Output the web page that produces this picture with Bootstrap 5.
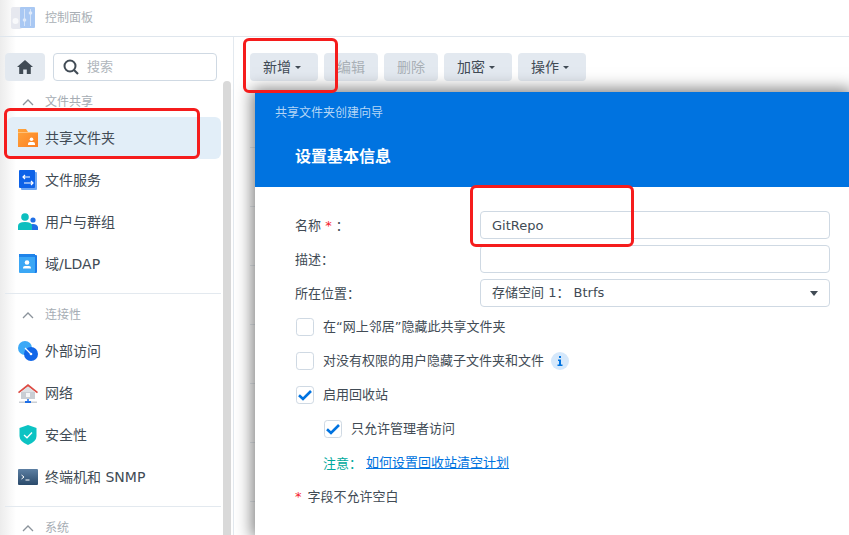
<!DOCTYPE html>
<html lang="zh">
<head>
<meta charset="utf-8">
<title>控制面板</title>
<link rel="stylesheet" href="https://cdn.jsdelivr.net/npm/bootstrap@5.3.0/dist/css/bootstrap.min.css">
<style>
html,body{height:100%;}
body{width:849px;height:535px;overflow:hidden;font-family:"DejaVu Sans","Noto Sans CJK SC",sans-serif;font-size:14px;color:#414b55;background:#fff;}
.app-shell{position:relative;height:535px;background:linear-gradient(90deg,#ececec 0,#fff 16px);}
.app-top{height:37px;border-bottom:1px solid #dfe6ed;padding-left:11px;gap:10px;color:#a9afb5;font-size:12px;}
.app-body{height:498px;}
.side-pane{width:234px;flex:none;border-right:1px solid #e3e9ef;padding:16px 0 0 5px;position:relative;overflow:hidden;}
.side-tools{width:212px;height:28px;gap:8px;}
.home-btn{width:40px;height:28px;background:#e3e9f0;border-radius:4px;}
.search-box{width:164px;height:28px;border:1px solid #cfd9e3;border-radius:4px;padding-left:9px;gap:8px;color:#b0b6bc;font-size:13px;background:#fff;}
.side-list{width:216px;}
.sec-head{height:36px;padding:6px 0 0 17px;gap:11px;font-size:12px;color:#a6adb4;}
.side-item{height:42px;padding:0 0 0 13px;gap:7px;color:#414b55;font-size:14px;border-radius:6px;}
.side-item.is-on{background:#e2eef8;margin-left:2px;padding-left:11px;width:214px;}
.side-item svg{flex:none;}
.side-rule{border-top:1px solid #e3e9ef;margin:8px 0 0;height:1px;}
.rail{position:absolute;left:223px;top:44px;bottom:0;width:8px;background:#d9d9d9;border-radius:4px 4px 0 0;}
.main-pane{min-width:0;padding:16px 0 0 16px;}
.tool-row{gap:6px;height:28px;}
.tool-btn{height:28px;padding:0 13px;font-size:14px;line-height:28px;background:#e3e9f0;color:#414b55;border:0;border-radius:4px;}
.tool-btn:disabled{background:#e3e9f0;color:#a9b0b6;opacity:1;}
.tool-btn.dropdown-toggle::after{border-top-width:3px;border-left-width:3px;border-right-width:3px;margin-left:4px;margin-right:4px;vertical-align:3px;}
.bg-rows{margin-top:8px;}
.bg-row{height:59px;border-bottom:1px solid #e8ecf0;}
.wizard{position:absolute;left:255px;top:92px;right:0;bottom:0;background:#fff;font-size:13px;box-shadow:0 0 15px 3px rgba(0,0,0,.5);}
.wiz-head{height:95px;background:#0073e0;padding:12px 0 0 20px;color:#b5d6f6;font-size:12px;}
.wiz-title{color:#fff;font-size:16px;font-weight:700;margin:23px 0 0 20px;line-height:24px;}
.wiz-form{padding:24px 19px 0 40px;}
.field-row{height:28px;margin-bottom:6px;}
.field-label{width:185px;flex:none;}
.wide-colon{font-family:"Noto Sans CJK TC",sans-serif;}
.field-ctl{height:28px;min-height:28px;padding:0 11px;font-size:13px;color:#414b55;border:1px solid #cfd9e3;border-radius:4px;box-shadow:none;}
select.field-ctl{padding:0 11px;background-image:url("data:image/svg+xml,%3Csvg xmlns='http://www.w3.org/2000/svg' width='8' height='5'%3E%3Cpath d='M0 0h8L4 5z' fill='%23414b55'/%3E%3C/svg%3E");background-position:right 11px center;background-size:8px 5px;}
.star{color:#f5222d;}
.chk-row{height:34px;gap:9px;padding-left:1px;}
.chk-row.top-gap{margin-top:-3px;}
.chk-row.sub{padding-left:29px;gap:9px;}
.chk-box{width:18px;height:18px;margin:0;flex:none;border:1px solid #cfd9e3;border-radius:4px;box-shadow:none!important;}
.chk-box:checked{background-color:#fff;border-color:#cfd9e3;background-image:url("data:image/svg+xml,%3Csvg xmlns='http://www.w3.org/2000/svg' viewBox='0 0 18 18'%3E%3Cpath d='M3 9.2l4 3.800 8-8' fill='none' stroke='%230073e0' stroke-width='2.600'/%3E%3C/svg%3E");background-size:18px 18px;}
.info-dot{width:18px;height:18px;background:#d5e8fb;margin-left:-2px;}
.note-row{height:34px;padding-left:28px;gap:4px;}
.note-lead{color:#00a99d;}
.note-link{color:#0073e0;}
.req-row{height:34px;gap:6px;}
.mark-box{position:absolute;border:3px solid #f51c1c;border-radius:6px;pointer-events:none;}
.mark-a{left:243px;top:38px;width:95px;height:55px;}
.mark-b{left:4px;top:108px;width:196px;height:51px;}
.mark-c{left:470px;top:185px;width:164px;height:62px;}
</style>
</head>
<body>
<div class="app-shell">
  <div class="app-top d-flex align-items-center">
    <svg width="24" height="24" viewBox="0 0 24 24">
      <rect x="0" y="1" width="11" height="22" rx="2" fill="#e6e8ef"/>
      <circle cx="4.500" cy="15" r="3" fill="#f8f9fb"/>
      <rect x="9" y="1" width="15" height="21" rx="1" fill="#a9c8f3"/>
      <path d="M13.500 3v17M19.500 3v17" stroke="#d4e3f8" stroke-width="1"/>
      <circle cx="13.500" cy="14" r="1.800" fill="#dfeafa"/><circle cx="19.500" cy="7" r="1.800" fill="#dfeafa"/>
    </svg>
    <span>控制面板</span>
  </div>
  <div class="app-body d-flex">
    <aside class="side-pane">
      <div class="side-tools d-flex">
        <div class="home-btn d-flex align-items-center justify-content-center">
          <svg width="16" height="14" viewBox="0 0 16 14"><path d="M8 0 0 7h2.200v7h4V9.500h3.600V14h4V7H16z" fill="#414b55"/></svg>
        </div>
        <div class="search-box d-flex align-items-center">
          <svg width="16" height="16" viewBox="0 0 16 16"><circle cx="7" cy="7" r="5.500" fill="none" stroke="#414b55" stroke-width="2"/><path d="M11 11l4 4" stroke="#414b55" stroke-width="2.200"/></svg>
          <span>搜索</span>
        </div>
      </div>
      <nav class="side-list">
        <div class="sec-head d-flex align-items-center">
          <svg width="12" height="7" viewBox="0 0 12 7"><path d="M1 6l5-5 5 5" fill="none" stroke="#8b939b" stroke-width="1.300"/></svg><span>文件共享</span>
        </div>
        <a class="side-item is-on d-flex align-items-center text-decoration-none">
          <svg width="20" height="20" viewBox="0 0 20 20"><defs><linearGradient id="fo" x1="0" y1="0" x2="1" y2="1"><stop offset="0" stop-color="#ffa53d"/><stop offset="1" stop-color="#fb7f22"/></linearGradient></defs><path d="M0 1h8l2 3h10v15H0z" fill="url(#fo)"/><path d="M0 4h20v1H0z" fill="#ffc27a"/><circle cx="13.500" cy="11.300" r="1.800" fill="#fff"/><path d="M10 17v-1.500q0-1.500 2-1.500h3q2 0 2 1.500V17z" fill="#fff"/></svg>
          <span>共享文件夹</span>
        </a>
        <a class="side-item d-flex align-items-center text-decoration-none">
          <svg width="20" height="20" viewBox="0 0 20 20"><rect x="3" y="2" width="16" height="18" rx="1" fill="#6fa8f3"/><rect x="1" y="0" width="16" height="18" rx="1" fill="#0d62e8"/><path d="M12 7H5M7 5 5 7l2 2M6 13h9M13 11l2 2-2 2" fill="none" stroke="#fff" stroke-width="1.200"/></svg>
          <span>文件服务</span>
        </a>
        <a class="side-item d-flex align-items-center text-decoration-none">
          <svg width="20" height="20" viewBox="0 0 20 20"><circle cx="15" cy="8" r="2.600" fill="#1f6fe6"/><path d="M11 18v-3q0-3 4-3t5 3v3z" fill="#1f6fe6"/><circle cx="7" cy="5" r="3.800" fill="#0dbfbf"/><path d="M0 18v-4q0-4 7-4t7 4v4z" fill="#0dbfbf"/></svg>
          <span>用户与群组</span>
        </a>
        <a class="side-item d-flex align-items-center text-decoration-none">
          <svg width="20" height="20" viewBox="0 0 20 20"><rect x="3" y="1" width="16" height="18" rx="1" fill="#1c7ce8"/><rect x="1" y="0" width="16" height="19" rx="1" fill="#3ba7f5"/><rect x="1" y="0" width="16" height="3" fill="#1f84ea"/><circle cx="9" cy="8.500" r="2.300" fill="#fff"/><path d="M5 14.500v-.5q0-2 2-2h4q2 0 2 2v.5z" fill="#fff"/></svg>
          <span>域/LDAP</span>
        </a>
        <div class="side-rule"></div>
        <div class="sec-head d-flex align-items-center">
          <svg width="12" height="7" viewBox="0 0 12 7"><path d="M1 6l5-5 5 5" fill="none" stroke="#8b939b" stroke-width="1.300"/></svg><span>连接性</span>
        </div>
        <a class="side-item d-flex align-items-center text-decoration-none">
          <svg width="20" height="20" viewBox="0 0 20 20"><circle cx="7" cy="7" r="7" fill="#3ca9f7"/><circle cx="13" cy="13" r="7" fill="#1166e8"/><path d="M7 7l6 6" stroke="#fff" stroke-width="1.200"/><circle cx="13" cy="13" r="1.300" fill="#fff"/></svg>
          <span>外部访问</span>
        </a>
        <a class="side-item d-flex align-items-center text-decoration-none">
          <svg width="20" height="20" viewBox="0 0 20 20"><path d="M3 9h14v7H3z" fill="#c9ced4"/><path d="M0 9l10-8 10 8-1 1.200L10 3.500 1 10.200z" fill="#dd4b43"/><path d="M10 3.500l7 5.500H3z" fill="#dde1e5"/><rect x="8" y="10" width="4" height="4" fill="#f5f6f7"/><rect x="1" y="18.500" width="18" height="1.500" fill="#c9ced4"/><path d="M10 16v3" stroke="#1f6fe6" stroke-width="1.500"/><rect x="7" y="18" width="6" height="2" fill="#1f6fe6"/></svg>
          <span>网络</span>
        </a>
        <a class="side-item d-flex align-items-center text-decoration-none">
          <svg width="20" height="20" viewBox="0 0 20 20"><path d="M10 0l8.500 3v8q0 5.500-8.500 9-8.500-3.500-8.500-9V3z" fill="#0cc3c3"/><path d="M6 10l3 2.800L14 7.500" fill="none" stroke="#fff" stroke-width="1.300"/></svg>
          <span>安全性</span>
        </a>
        <a class="side-item d-flex align-items-center text-decoration-none">
          <svg width="20" height="16" viewBox="0 0 20 16"><defs><linearGradient id="tm" x1="0" y1="0" x2="0" y2="1"><stop offset="0" stop-color="#5c7fa3"/><stop offset="1" stop-color="#2a4a6b"/></linearGradient></defs><rect width="20" height="16" rx="1" fill="url(#tm)"/><path d="M3.500 6l2.500 2-2.500 2M7.500 11h4" fill="none" stroke="#fff" stroke-width="1"/></svg>
          <span>终端机和 SNMP</span>
        </a>
        <div class="side-rule"></div>
        <div class="sec-head d-flex align-items-center">
          <svg width="12" height="7" viewBox="0 0 12 7"><path d="M1 6l5-5 5 5" fill="none" stroke="#8b939b" stroke-width="1.300"/></svg><span>系统</span>
        </div>
      </nav>
      <div class="rail"></div>
    </aside>
    <main class="main-pane flex-grow-1">
      <div class="tool-row d-flex">
        <button class="btn tool-btn dropdown-toggle" type="button">新增</button>
        <button class="btn tool-btn" type="button" disabled>编辑</button>
        <button class="btn tool-btn" type="button" disabled>删除</button>
        <button class="btn tool-btn dropdown-toggle" type="button">加密</button>
        <button class="btn tool-btn dropdown-toggle" type="button">操作</button>
      </div>
      <div class="bg-rows">
        <div class="bg-row"></div><div class="bg-row"></div><div class="bg-row"></div><div class="bg-row"></div><div class="bg-row"></div><div class="bg-row"></div><div class="bg-row"></div>
      </div>
    </main>
  </div>

  <section class="wizard">
    <div class="wiz-head">
      <div>共享文件夹创建向导</div>
      <div class="wiz-title">设置基本信息</div>
    </div>
    <form class="wiz-form">
      <div class="field-row d-flex align-items-center">
        <label class="field-label">名称 <span class="star">*</span> <span class="wide-colon">：</span></label>
        <input class="form-control field-ctl" type="text" value="GitRepo">
      </div>
      <div class="field-row d-flex align-items-center">
        <label class="field-label">描述<span class="wide-colon">：</span></label>
        <input class="form-control field-ctl" type="text">
      </div>
      <div class="field-row d-flex align-items-center">
        <label class="field-label">所在位置<span class="wide-colon">：</span></label>
        <select class="form-select field-ctl"><option>存储空间 1： Btrfs</option></select>
      </div>
      <div class="chk-row top-gap d-flex align-items-center">
        <input class="form-check-input chk-box" type="checkbox"><span>在“网上邻居”隐藏此共享文件夹</span>
      </div>
      <div class="chk-row d-flex align-items-center">
        <input class="form-check-input chk-box" type="checkbox"><span>对没有权限的用户隐藏子文件夹和文件</span>
        <span class="info-dot rounded-circle d-flex align-items-center justify-content-center">
          <svg width="6" height="10" viewBox="0 0 6 10"><path d="M2 0h2v2H2zM1 3.500h3V8.500h1.500V10H.5V8.500H2V5H1z" fill="#0073e0"/></svg>
        </span>
      </div>
      <div class="chk-row d-flex align-items-center">
        <input class="form-check-input chk-box" type="checkbox" checked><span>启用回收站</span>
      </div>
      <div class="chk-row sub d-flex align-items-center">
        <input class="form-check-input chk-box" type="checkbox" checked><span>只允许管理者访问</span>
      </div>
      <div class="note-row d-flex align-items-center">
        <span class="note-lead">注意<span class="wide-colon">：</span></span><a class="note-link" href="#">如何设置回收站清空计划</a>
      </div>
      <div class="req-row d-flex align-items-center">
        <span class="star">*</span><span>字段不允许空白</span>
      </div>
    </form>
  </section>

  <div class="mark-box mark-a"></div>
  <div class="mark-box mark-b"></div>
  <div class="mark-box mark-c"></div>
</div>
<script src="https://cdn.jsdelivr.net/npm/bootstrap@5.3.0/dist/js/bootstrap.bundle.min.js"></script>
</body>
</html>
